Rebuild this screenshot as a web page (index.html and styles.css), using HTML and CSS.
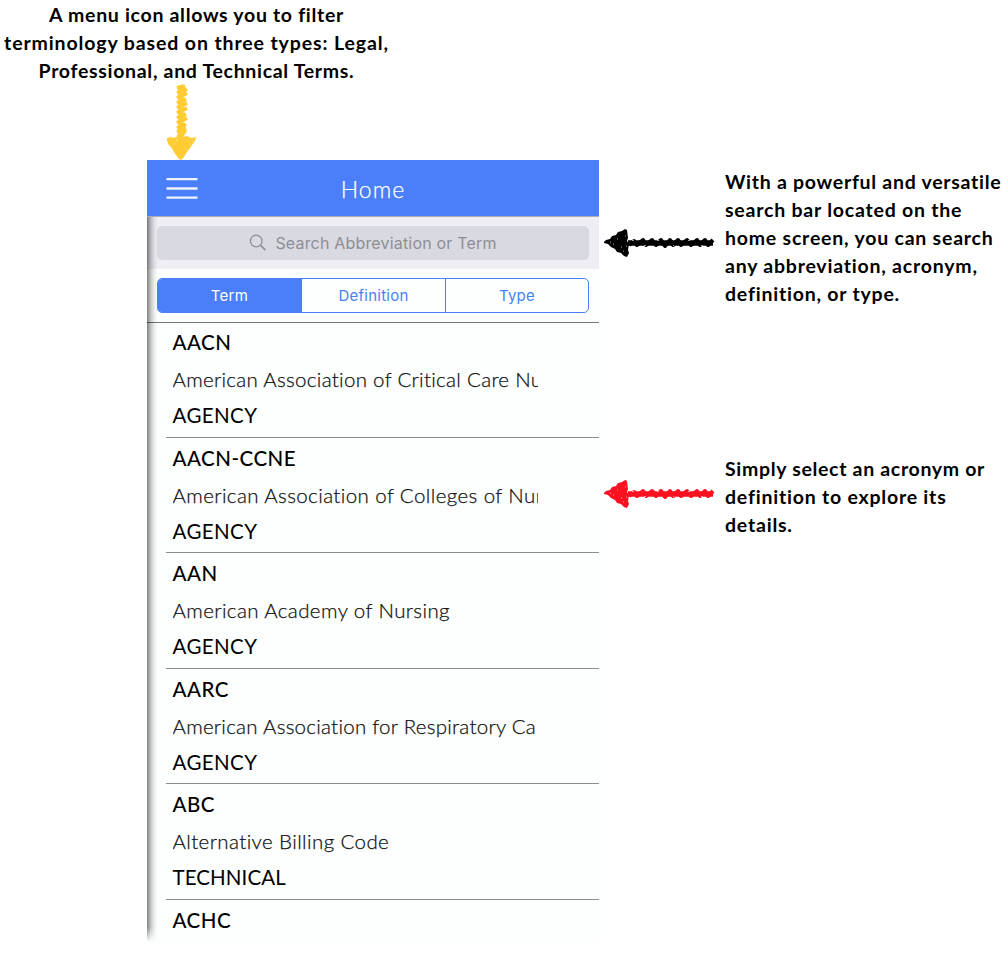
FILE: index.html
```html
<!DOCTYPE html>
<html lang="en">
<head>
<meta charset="utf-8">
<title>Home screen guide</title>
<link rel="stylesheet" href="styles.css">
</head>
<body>
<header class="intro">
  <p class="note note-center"><span class="l1">A menu icon allows you to filter</span><br><span class="l2">terminology based on three types: Legal,</span><br><span class="l3">Professional, and Technical Terms.</span></p>
  <svg class="arrow-down" width="34" height="77" viewBox="0 0 34 77">
    <path d="M12 5l8-2M12 10l10-4M12 15l10-5M12 20l9-4M12 25l10-5M12 30l10-5M12 35l9-4M12 40l10-5M12 45l9-4M12 49l9-4M13 54l7-7" fill="none" stroke="#fc3" stroke-width="4"/>
    <path d="M16 4v45" stroke="#fc3" stroke-width="5"/>
    <path d="M15 57l6-10" stroke="#fc3" stroke-width="2.5"/>
    <path d="M2 55l4-1 3 1 4-2 5 1 4-1 4 2 5-1-1 4-3 4-2 3-3 4-3 5-3 3-2-1-3-4-2-3-3-5-3-3-1-4z" fill="#fc3"/>
    <path d="M6 58h1M11 57h2M22 57h1M27 58h1M24 61h1M9 61h1M20 66h1" stroke="#ffe79a" stroke-width="1"/>
  </svg>
</header>
<main class="stage">
  <section class="phone">
    <div class="navbar">
      <svg class="menu" width="32" height="24" viewBox="0 0 32 24"><path d="M.5 2.2h31M.5 11.5h31M.5 20.7h31" stroke="#eef4ff" stroke-width="2.3"/></svg>
      <h1 class="title">Home</h1>
    </div>
    <div class="searchbar">
      <div class="field">
        <svg width="18" height="18" viewBox="0 0 18 18" fill="none" stroke="#8e8e93"><circle cx="7.2" cy="7" r="5.8" stroke-width="1.3"/><path d="M11.4 11.2l5 5" stroke-width="1.7"/></svg>
        <span>Search Abbreviation or Term</span>
      </div>
    </div>
    <div class="scope">
      <div class="segments"><span class="seg active">Term</span><span class="seg">Definition</span><span class="seg">Type</span></div>
    </div>
    <ul class="list">
      <li class="row"><b class="abbr">AACN</b><span class="def d1">American Association of Critical Care Nurses</span><span class="type">AGENCY</span></li>
      <li class="row"><b class="abbr">AACN-CCNE</b><span class="def">American Association of Colleges of Nursing</span><span class="type">AGENCY</span></li>
      <li class="row"><b class="abbr">AAN</b><span class="def">American Academy of Nursing</span><span class="type">AGENCY</span></li>
      <li class="row"><b class="abbr">AARC</b><span class="def d4">American Association for Respiratory Ca</span><span class="type">AGENCY</span></li>
      <li class="row"><b class="abbr">ABC</b><span class="def">Alternative Billing Code</span><span class="type wide">TECHNICAL</span></li>
      <li class="row"><b class="abbr">ACHC</b></li>
    </ul>
    <div class="edge"></div>
  </section>
  <aside class="callouts">
    <div class="callout search-callout">
      <svg class="arrow" width="112" height="32" viewBox="0 0 112 32"><use href="#brush"/></svg>
      <p class="note"><span class="r1">With a powerful and versatile</span><br><span>search bar located on the</span><br><span>home screen, you can search</span><br><span>any abbreviation, acronym,</span><br><span>definition, or type.</span></p>
    </div>
    <div class="callout select-callout">
      <svg class="arrow red" width="112" height="32" viewBox="0 0 112 32">
        <g id="brush">
          <path d="M1 15l2-2 4-1 2-3 4-1 2-3 4-1 3-2 2 1 1 8-1 3 2 3-1 6 1 3-2 4-3-1-3-3-4-1-2-3-4-2-3-3-4-1z" fill="currentColor"/>
          <path d="M25 16h85" fill="none" stroke="currentColor" stroke-width="5.4"/>
          <path d="M26 18l5-4 3 4 6-5 3 5 6-5 4 5 5-5 4 6 5-6 3 5 5-5 3 5 6-5 4 5 6-5 3 5 5-5 3 5 5-5" fill="none" stroke="currentColor" stroke-width="4" stroke-linejoin="round"/>
          <path d="M10 17h1M14 12h1M18 20h1M22 9h1M20 24h1M7 15h1M23 19h1" stroke="#fff" stroke-opacity=".65"/>
          <path d="M29 13.5h2M41 18.5h2M54 13.5h2M70 18.5h1M85 13.5h2M98 18.5h2" stroke="#fff" stroke-opacity=".6"/>
        </g>
      </svg>
      <p class="note"><span class="s1">Simply select an acronym or</span><br><span>definition to explore its</span><br><span>details.</span></p>
    </div>
  </aside>
</main>
</body>
</html>
```
FILE: styles.css
```css
* { box-sizing: border-box; }
body { margin: 0; background: #fff; color: #000; font-family: Lato, "Liberation Sans", sans-serif; width: 1008px; height: 962px; overflow: hidden; }
.intro { height: 160px; display: flex; flex-direction: column; align-items: flex-start; padding-top: 1px; }
.note { margin: 0; font-size: 19.5px; line-height: 28px; font-weight: 700; letter-spacing: .78px; white-space: nowrap; }
.note-center { width: 393px; display: flow-root; text-align: center; }
.l1 { letter-spacing: .69px; }
.l2 { letter-spacing: .88px; }
.l3 { letter-spacing: .69px; }
.r1 { letter-spacing: .72px; }
.s1 { letter-spacing: .68px; }
.arrow-down { margin: -2px 0 0 165px; flex: none; }
.stage { display: flex; padding-left: 147px; }
.phone { width: 452px; height: 782px; position: relative; overflow: hidden; background: #fdfffe; flex: none; }
.navbar { height: 56px; background: #4a7ff9; display: grid; grid-template-columns: 51px 1fr 51px; align-items: center; color: #fff; }
.menu { margin: 1px 0 0 18.5px; }
.title { margin: 1px 0 0; text-align: center; font-weight: 300; font-size: 23px; letter-spacing: 1.1px; -webkit-text-stroke: .25px; }
.searchbar { height: 53px; background: #efeef4; border-top: 1px solid #aaacb8; padding: 9px 10px; }
.field { height: 34px; border-radius: 5px; background: #d9d9e2; display: flex; align-items: center; justify-content: center; gap: 8px; padding-bottom: 1px; color: #8e8e93; font: 400 16px Inter, sans-serif; letter-spacing: .18px; }
.scope { height: 53px; background: #fdfffe; padding: 9px 10px 0; }
.segments { height: 35px; border: 1.5px solid #4a7ff9; border-radius: 5px; display: grid; grid-template-columns: 143px 144px 1fr; overflow: hidden; font: 400 15px Inter, sans-serif; letter-spacing: .25px; color: #4a7ff9; }
.seg { display: flex; align-items: center; justify-content: center; }
.seg + .seg { border-left: 1px solid #4a7ff9; }
.active { background: #4a7ff9; color: #fff; }
.list { margin: 0; padding: 0; list-style: none; border-top: 1px solid #777; }
.row { margin-left: 19px; padding: 6px 0 0 6.5px; height: 115.6px; border-bottom: 1px solid #8b8c8c; display: flex; flex-direction: column; font-size: 20.5px; }
.row:first-child { height: 114.6px; padding-top: 5px; }
.abbr { line-height: 28px; font-weight: 500; letter-spacing: .5px; }
.def { line-height: 28px; margin-top: 9px; width: 365.5px; overflow: hidden; white-space: nowrap; font-weight: 300; letter-spacing: .4px; color: #111; -webkit-text-stroke: .25px; }
.d1 { letter-spacing: .3px; }
.d4 { letter-spacing: .26px; }
.type { line-height: 28px; margin-top: 8px; font-weight: 400; letter-spacing: .4px; }
.wide { letter-spacing: .1px; }
.edge { position: absolute; left: 0; top: 57px; bottom: 0; width: 11px; background: linear-gradient(90deg, rgba(0,0,0,.5), rgba(0,0,0,.22) 35%, rgba(0,0,0,.06) 70%, transparent); mask: linear-gradient(#000 98%, transparent); }
.callouts { padding-left: 4px; }
.callout { display: flex; align-items: center; gap: 10px; }
.search-callout { padding-top: 8px; }
.search-callout .arrow { margin-top: 9px; }
.select-callout { padding-top: 147px; }
.arrow { flex: none; color: #000; }
.red { color: #fd1020; margin-bottom: 6px; }
```
